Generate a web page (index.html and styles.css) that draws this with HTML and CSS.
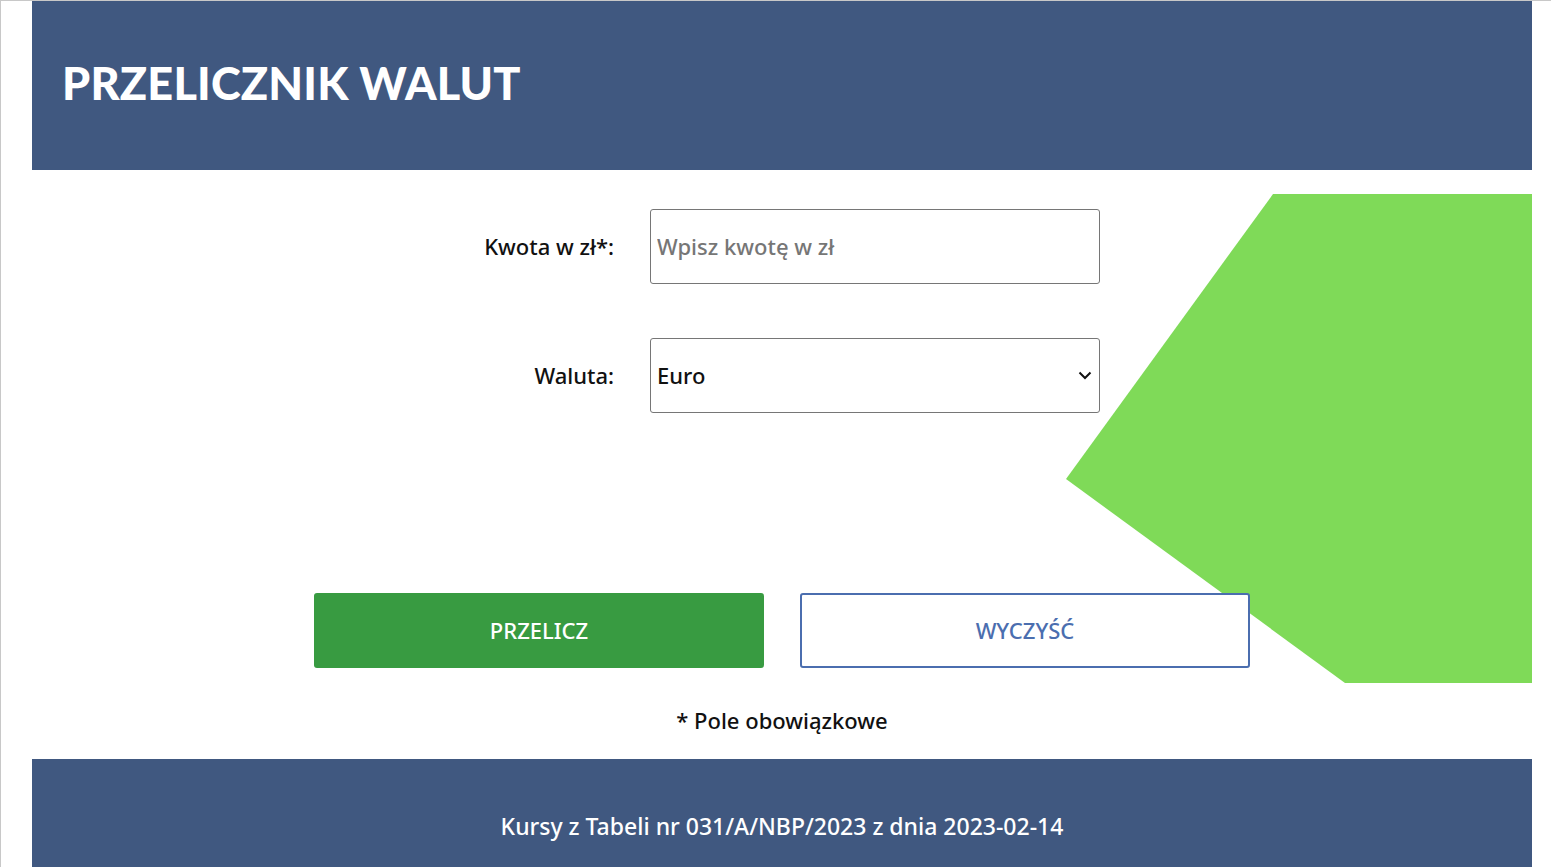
FILE: index.html
```html
<!DOCTYPE html>
<html lang="pl">
<head>
<meta charset="utf-8">
<title>Przelicznik walut</title>
<link rel="stylesheet" href="styles.css">
</head>
<body>
<div class="frame">
  <div class="page">
    <header class="top">
      <h1 class="title">PRZELICZNIK WALUT</h1>
    </header>
    <main class="main">
      <div class="shape"></div>
      <form class="form">
        <div class="row">
          <label class="label" for="kwota">Kwota w zł*:</label>
          <input class="field" id="kwota" type="text" placeholder="Wpisz kwotę w zł">
        </div>
        <div class="row">
          <label class="label" for="waluta">Waluta:</label>
          <div class="select-wrap">
            <select class="field select" id="waluta">
              <option>Euro</option>
              <option>Dolar amerykański</option>
              <option>Frank szwajcarski</option>
            </select>
            <svg class="chevron" width="14" height="9" viewBox="0 0 14 9" aria-hidden="true">
              <path d="M1.5 1.5 L7 7 L12.5 1.5" fill="none" stroke="#111" stroke-width="2"/>
            </svg>
          </div>
        </div>
        <div class="buttons">
          <button type="button" class="btn btn-primary">PRZELICZ</button>
          <button type="button" class="btn btn-outline">WYCZYŚĆ</button>
        </div>
        <p class="note">* Pole obowiązkowe</p>
      </form>
    </main>
    <footer class="bottom">
      <p class="rates">Kursy z Tabeli nr 031/A/NBP/2023 z dnia 2023-02-14</p>
    </footer>
  </div>
</div>
</body>
</html>
```

FILE: styles.css
```css
* { box-sizing: border-box; }
html, body { margin: 0; padding: 0; background: #fff; }
body {
  font-family: "Noto Sans", "Open Sans", sans-serif;
  color: #111;
  overflow: hidden;
}
.frame {
  border-left: 1px solid #c8c8c8;
  border-top: 1px solid #c8c8c8;
  height: 867px;
  padding-left: 31px;
  padding-right: 19px;
}
.page {
  width: 1500px;
}
.top {
  background: #405880;
  height: 169px;
  display: flex;
  align-items: center;
  padding-left: 30px;
  padding-bottom: 6px;
}
.title {
  margin: 0;
  color: #fff;
  font-family: "Lato", sans-serif;
  font-weight: 900;
  font-size: 45px;
  letter-spacing: 0.2px;
}
.main {
  position: relative;
  padding-top: 39px;
  height: 589px;
}
.shape {
  position: absolute;
  left: 1034px;
  top: 24px;
  width: 466px;
  height: 489px;
  background: #7fda58;
  clip-path: polygon(207px 0, 466px 0, 466px 489px, 279px 489px, 0 285px);
}
.form {
  position: relative;
  width: 936px;
  margin-left: 282px;
}
.row {
  display: flex;
  align-items: center;
  gap: 36px;
  margin-bottom: 54px;
}
.label {
  width: 300px;
  text-align: right;
  font-size: 22px;
  font-weight: 500;
  color: #111;
  padding-bottom: 2px;
}
.field {
  width: 450px;
  height: 75px;
  border: 1px solid #767676;
  border-radius: 3px;
  background: #fff;
  font-family: inherit;
  font-size: 22px;
  font-weight: 500;
  color: #111;
  padding: 0 6px 2px;
}
.field::placeholder { color: #767676; }
.select-wrap {
  position: relative;
  width: 450px;
  height: 75px;
}
.select {
  appearance: none;
  -webkit-appearance: none;
  padding-left: 6px;
  padding-right: 30px;
}
.chevron {
  position: absolute;
  right: 8px;
  top: 33px;
  pointer-events: none;
}
.buttons {
  display: flex;
  gap: 36px;
  margin-top: 180px;
}
.btn {
  width: 450px;
  height: 75px;
  border-radius: 3px;
  font-family: inherit;
  font-size: 22px;
  font-weight: 500;
  cursor: pointer;
  padding-bottom: 2px;
}
.btn-primary {
  background: #389b41;
  border: none;
  color: #fff;
}
.btn-outline {
  background: #fff;
  border: 2px solid #4b6eaf;
  color: #4b6eaf;
}
.note {
  margin: 37px 0 0;
  text-align: center;
  font-size: 22px;
  font-weight: 500;
  color: #111;
}
.bottom {
  background: #405880;
  height: 120px;
  display: flex;
  justify-content: center;
  padding-top: 51px;
}
.rates {
  margin: 0;
  color: #fff;
  font-size: 23px;
  font-weight: 500;
}
```
